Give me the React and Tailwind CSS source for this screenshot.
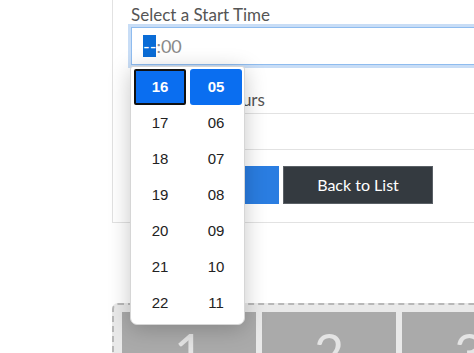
import React from "react";

const hours = ["16", "17", "18", "19", "20", "21", "22"];
const minutes = ["05", "06", "07", "08", "09", "10", "11"];

function TimeColumn({ items, focused }) {
  return (
    <div className="flex flex-col w-[52px]">
      {items.map((v, i) => (
        <div
          key={v}
          className={
            i === 0
              ? focused
                ? "h-[36px] flex items-center justify-center bg-[#0a6ef0] text-white font-bold border-2 border-[#111] rounded-[2px]"
                : "h-[36px] flex items-center justify-center bg-[#0a6ef0] text-white font-bold rounded-[3px]"
              : "h-[36px] flex items-center justify-center text-[#222]"
          }
        >
          {v}
        </div>
      ))}
    </div>
  );
}

export default function App() {
  return (
    <div className="w-[474px] h-[353px] overflow-hidden bg-white relative font-['Lato',sans-serif]">
      <div className="pl-[112px]">
        {/* form card */}
        <div className="w-[400px] border-l border-b border-[#e2e2e2] pl-[18px] pb-[18px]">
          <label className="block pt-[4px] text-[17px] leading-[21px] text-[#555]">
            Select a Start Time
          </label>
          <div className="mt-[2px] h-[38px] border border-[#8fbcef] ring-[3px] ring-[#c8ddf6] flex items-center pl-[11px] text-[18px] text-[#8a8a8a]">
            <span className="bg-[#0a6cd6] text-white leading-[22px]">--</span>
            <span>:00</span>
          </div>
          <label className="block mt-[24px] text-[17px] leading-[21px] text-[#555]">
            Duration in Hours
          </label>
          <div className="mt-[3px] h-[37px] border-y border-[#e2e2e2]" />
          <div className="flex gap-[4px] mt-[16px] -ml-px">
            <button className="w-[149px] h-[38px] bg-[#2a7de1] text-white text-[16px]">
              Submit
            </button>
            <button className="w-[150px] h-[38px] bg-[#343a40] border border-[#5a6066] text-white text-[16px]">
              Back to List
            </button>
          </div>
        </div>

        {/* seat grid */}
        <div className="mt-[80px] w-[400px] border-2 border-dashed border-[#b8b8b8] rounded-tl-[6px] bg-[#e9e9e9] pt-[7px] pl-[8px]">
          <div className="flex gap-[6px]">
            {["1", "2", "3"].map((n) => (
              <div
                key={n}
                className="w-[134px] h-[60px] shrink-0 bg-[#aaaaaa] flex justify-center pt-[14px] text-[52px] leading-[52px] text-[#e4e4e4]"
              >
                {n}
              </div>
            ))}
          </div>
        </div>
      </div>

      {/* time picker popup */}
      <div className="absolute left-[130px] top-[66px] w-[115px] h-[259px] bg-white border border-[#d6d6d6] rounded-b-[7px] rounded-t-[3px] shadow-[0_4px_22px_rgba(0,0,0,0.22)] pt-[2px] pl-[3px] flex gap-[4px] font-['Liberation_Sans',Arial,sans-serif] text-[15px]">
        <TimeColumn items={hours} focused />
        <TimeColumn items={minutes} />
      </div>
    </div>
  );
}
